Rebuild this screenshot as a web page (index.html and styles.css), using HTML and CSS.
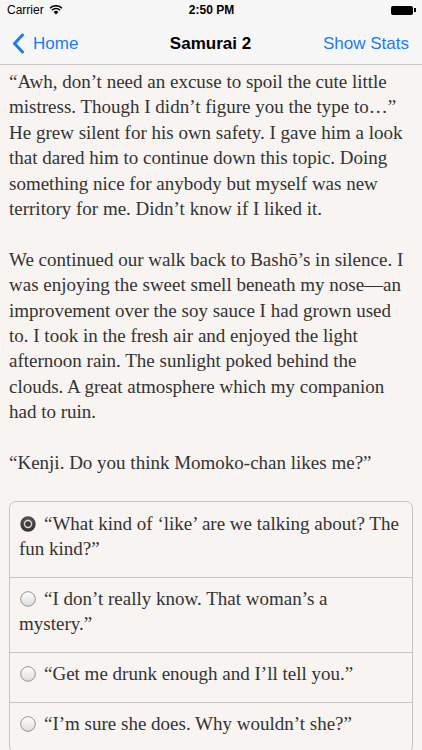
FILE: index.html
```html
<!DOCTYPE html>
<html>
<head>
<title>Samurai 2</title>
<link rel="stylesheet" href="styles.css">
</head>
<body>

<div class="status-bar">
  <div class="status-left">
    <span>Carrier</span>
    <svg class="wifi" width="14" height="10" viewBox="0 0 14 10">
      <path d="M7 9.6 L4.6 7 A3.4 3.4 0 0 1 9.4 7 Z" fill="#000"/>
      <path d="M2.9 5.2 A5.8 5.8 0 0 1 11.1 5.2" fill="none" stroke="#000" stroke-width="1.5"/>
      <path d="M1 3.2 A8.5 8.5 0 0 1 13 3.2" fill="none" stroke="#000" stroke-width="1.5"/>
    </svg>
  </div>
  <div class="status-time">2:50 PM</div>
  <div class="status-right">
    <div class="battery"></div>
    <div class="battery-nub"></div>
  </div>
</div>

<div class="nav-bar">
  <div class="nav-back">
    <svg width="13" height="21" viewBox="0 0 13 21">
      <path d="M10.5 2 L2.5 10.5 L10.5 19" fill="none" stroke="#1a7cf5" stroke-width="3" stroke-linecap="round" stroke-linejoin="round"/>
    </svg>
    <span>Home</span>
  </div>
  <div class="nav-title">Samurai 2</div>
  <div class="nav-action">Show Stats</div>
</div>

<div class="story">
  <p>&ldquo;Awh, don&rsquo;t need an excuse to spoil the cute little mistress. Though I didn&rsquo;t figure you the type to&hellip;&rdquo; He grew silent for his own safety. I gave him a look that dared him to continue down this topic. Doing something nice for anybody but myself was new territory for me. Didn&rsquo;t know if I liked it.</p>
  <p>We continued our walk back to Bash&omacr;&rsquo;s in silence. I was enjoying the sweet smell beneath my nose&mdash;an improvement over the soy sauce I had grown used to. I took in the fresh air and enjoyed the light afternoon rain. The sunlight poked behind the clouds. A great atmosphere which my companion had to ruin.</p>
  <p>&ldquo;Kenji. Do you think Momoko-chan likes me?&rdquo;</p>

  <div class="choices">
    <div class="choice">
      <svg class="radio" width="16" height="16" viewBox="0 0 16 16">
        <defs>
          <radialGradient id="sel" cx="50%" cy="35%" r="65%">
            <stop offset="0" stop-color="#6a6a6a"/>
            <stop offset="1" stop-color="#2e2e2e"/>
          </radialGradient>
          <linearGradient id="off" x1="0" y1="0" x2="0" y2="1">
            <stop offset="0" stop-color="#ffffff"/>
            <stop offset="1" stop-color="#dcdcdc"/>
          </linearGradient>
        </defs>
        <circle cx="8" cy="8" r="7.7" fill="url(#sel)"/>
        <circle cx="8" cy="8" r="4.2" fill="#d9d9d9"/>
        <circle cx="8" cy="8" r="2.8" fill="#3a3a3a"/>
      </svg>&ldquo;What kind of &lsquo;like&rsquo; are we talking about? The fun kind?&rdquo;
    </div>
    <div class="choice">
      <svg class="radio" width="16" height="16" viewBox="0 0 16 16">
        <circle cx="8" cy="8" r="7.3" fill="url(#off)" stroke="#8a8a8a" stroke-width="0.9"/>
      </svg>&ldquo;I don&rsquo;t really know. That woman&rsquo;s a mystery.&rdquo;
    </div>
    <div class="choice">
      <svg class="radio" width="16" height="16" viewBox="0 0 16 16">
        <circle cx="8" cy="8" r="7.3" fill="url(#off)" stroke="#8a8a8a" stroke-width="0.9"/>
      </svg>&ldquo;Get me drunk enough and I&rsquo;ll tell you.&rdquo;
    </div>
    <div class="choice">
      <svg class="radio" width="16" height="16" viewBox="0 0 16 16">
        <circle cx="8" cy="8" r="7.3" fill="url(#off)" stroke="#8a8a8a" stroke-width="0.9"/>
      </svg>&ldquo;I&rsquo;m sure she does. Why wouldn&rsquo;t she?&rdquo;
    </div>
  </div>
</div>

</body>
</html>
```

FILE: styles.css
```css
html, body {
  margin: 0;
  padding: 0;
}

body {
  width: 422px;
  height: 750px;
  overflow: hidden;
  background: #f7f4f1;
  font-family: "Liberation Sans", Arial, sans-serif;
}

/* Status bar */
.status-bar {
  height: 20px;
  background: #f7f7f7;
  display: flex;
  align-items: center;
  justify-content: space-between;
  padding: 0 6px 0 7px;
  font-size: 12px;
  color: #000;
}

.status-left {
  display: flex;
  align-items: center;
  gap: 5px;
  width: 90px;
}

.status-time {
  font-weight: bold;
  font-size: 12px;
}

.status-right {
  width: 90px;
  display: flex;
  justify-content: flex-end;
  align-items: center;
}

.battery {
  width: 22px;
  height: 9px;
  border-radius: 2px;
  background: #000;
}

.battery-nub {
  width: 1.5px;
  height: 4px;
  background: #000;
  margin-left: 1px;
}

/* Nav bar */
.nav-bar {
  height: 41px;
  padding: 3px 13px 0 12px;
  background: #f7f7f7;
  border-bottom: 1px solid #c9c9c9;
  display: flex;
  align-items: center;
  justify-content: space-between;
  font-size: 17px;
}

.nav-back {
  display: flex;
  align-items: center;
  gap: 8px;
  color: #1a7cf5;
  width: 110px;
}

.nav-title {
  font-weight: bold;
  color: #000;
}

.nav-action {
  color: #1a7cf5;
  width: 110px;
  text-align: right;
}

/* Story text */
.story {
  padding: 4px 9px 0 9px;
  font-family: "Liberation Serif", "Times New Roman", serif;
  font-size: 19px;
  line-height: 25.4px;
  color: #333;
}

.story p {
  margin: 0 0 25.4px 0;
}

.choices {
  border: 1px solid #c5c5c5;
  border-radius: 7px;
}

.choice {
  padding: 8px 9px 16px 9px;
  line-height: 25px;
  border-top: 1px solid #c5c5c5;
}

.choice:first-child {
  border-top: none;
  padding-top: 9px;
}

.radio {
  vertical-align: -2px;
  margin: 0 8px 0 1px;
}
```
